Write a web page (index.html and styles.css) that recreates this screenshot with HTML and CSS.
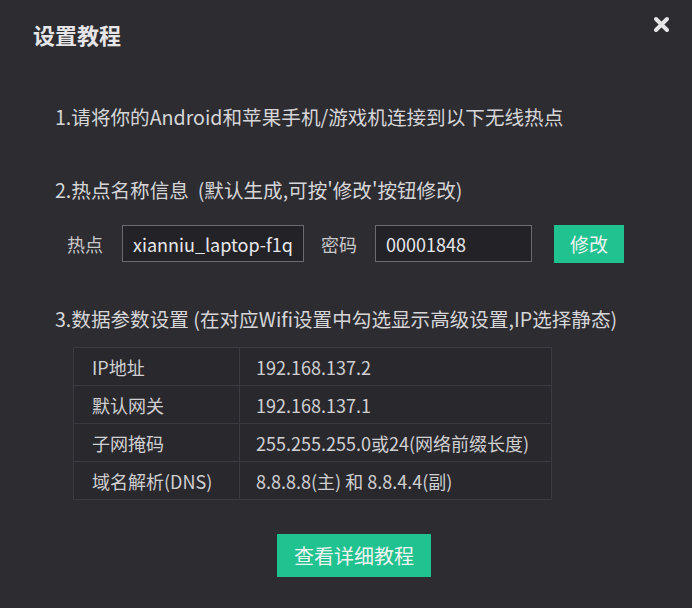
FILE: index.html
```html
<!DOCTYPE html>
<html lang="zh-CN">
<head>
  <meta charset="UTF-8">
  <title>设置教程</title>
  <link rel="stylesheet" href="styles.css">
</head>
<body>
  <div class="dialog">
    <div class="header">
      <h1 class="title">设置教程</h1>
      <span class="close">
        <svg width="17" height="17" viewBox="0 0 17 17">
          <path d="M3 3 L14 14 M14 3 L3 14" stroke="#e6e6e8" stroke-width="4" stroke-linecap="round"/>
        </svg>
      </span>
    </div>
    <div class="content">
      <p class="step step1">1.请将你的Android和苹果手机/游戏机连接到以下无线热点</p>
      <p class="step step2">2.热点名称信息&nbsp; (默认生成,可按'修改'按钮修改)</p>
      <div class="form-row">
        <label class="label">热点</label>
        <input class="field ssid" type="text" value="xianniu_laptop-f1qc2">
        <label class="label">密码</label>
        <input class="field pwd" type="text" value="00001848">
        <button class="btn btn-edit">修改</button>
      </div>
      <p class="step step3">3.数据参数设置 (在对应Wifi设置中勾选显示高级设置,IP选择静态)</p>
      <table class="params">
        <tr><td class="key">IP地址</td><td>192.168.137.2</td></tr>
        <tr><td class="key">默认网关</td><td>192.168.137.1</td></tr>
        <tr><td class="key">子网掩码</td><td>255.255.255.0或24(网络前缀长度)</td></tr>
        <tr><td class="key">域名解析(DNS)</td><td>8.8.8.8(主) 和 8.8.4.4(副)</td></tr>
      </table>
      <div class="actions">
        <button class="btn btn-detail">查看详细教程</button>
      </div>
    </div>
  </div>
</body>
</html>
```

FILE: styles.css
```css
body {
  margin: 0;
  background-color: #2d2c31;
  color: #d6d6d8;
  font-family: "Noto Sans CJK SC", "Noto Sans", sans-serif;
}
.dialog {
  width: 692px;
  height: 608px;
}
.header {
  display: flex;
  justify-content: space-between;
  align-items: flex-start;
  padding: 14px 22px 0 33px;
}
.title {
  margin: 5px 0 0;
  font-size: 22px;
  line-height: 30px;
  font-weight: bold;
  color: #e6e6e8;
}
.close {
  display: block;
  width: 17px;
  height: 17px;
}
.content {
  padding: 0 39px 0 55px;
}
.step {
  margin: 0;
  font-size: 19.6px;
  line-height: 30px;
}
.step1 {
  margin-top: 53px;
}
.step2 {
  margin-top: 43px;
}
.form-row {
  display: flex;
  align-items: center;
  margin-top: 20px;
  padding-left: 12px;
  height: 37px;
}
.label {
  font-size: 18px;
  color: #c8c8ca;
}
.field {
  box-sizing: border-box;
  height: 37px;
  margin: 0 17px 0 19px;
  padding: 0 10px;
  background-color: #232227;
  border: 1px solid #6b6a70;
  color: #e8e8ea;
  font-family: "Noto Sans CJK SC", "Noto Sans", sans-serif;
  font-size: 18px;
  outline: none;
}
.ssid {
  width: 182px;
}
.pwd {
  width: 157px;
  margin-left: 18px;
  margin-right: 22px;
}
.btn {
  border: none;
  background-color: #20c28f;
  color: #f2f2f2;
  font-family: "Noto Sans CJK SC", "Noto Sans", sans-serif;
  cursor: pointer;
  padding: 0;
}
.btn-edit {
  width: 70px;
  height: 38px;
  font-size: 19px;
}
.step3 {
  margin-top: 42px;
}
.params {
  margin: 13px 0 0 18px;
  width: 479px;
  border-collapse: collapse;
  background-color: #29282d;
  font-size: 18px;
  color: #d0d0d2;
}
.params td {
  height: 37px;
  padding: 0 0 0 16px;
  border: 1px solid #3b3a40;
}
.params td.key {
  width: 147px;
  padding-left: 18px;
}
.actions {
  text-align: center;
  margin-top: 34px;
}
.btn-detail {
  width: 154px;
  height: 43px;
  font-size: 20px;
}
```
